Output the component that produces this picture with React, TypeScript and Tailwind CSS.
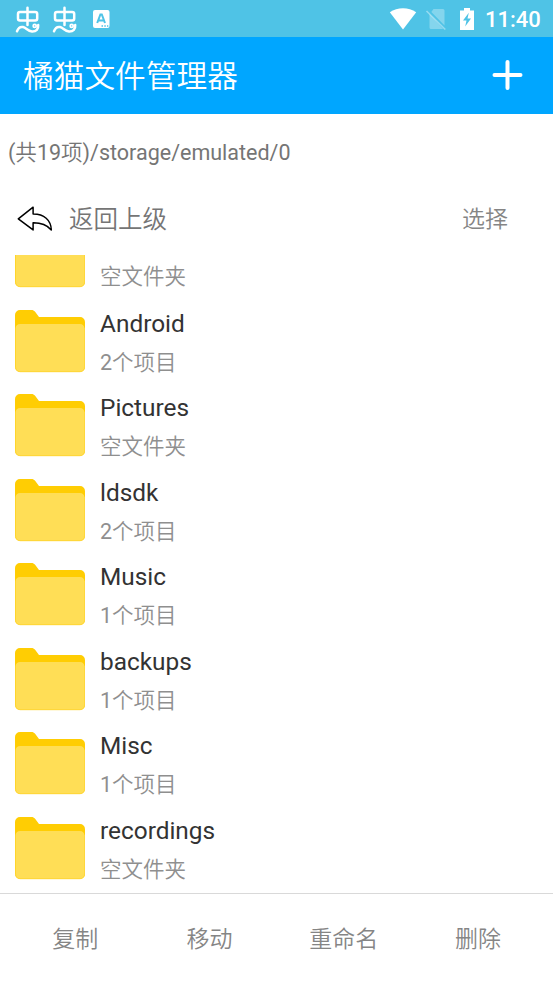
interface FolderItem {
  name?: string;
  count?: number;
}

const folders: FolderItem[] = [
  {},
  { name: 'Android', count: 2 },
  { name: 'Pictures' },
  { name: 'ldsdk', count: 2 },
  { name: 'Music', count: 1 },
  { name: 'backups', count: 1 },
  { name: 'Misc', count: 1 },
  { name: 'recordings' },
];

const actions = ['复制', '移动', '重命名', '删除'];

function BugIcon() {
  return (
    <svg width="26" height="28" viewBox="0 0 26 28" fill="none" stroke="white" strokeWidth="2.5" strokeLinecap="round">
      <rect x="4" y="6.900" width="19.200" height="8.600" rx="2" />
      <path d="M13.500 2.800v17.200" />
      <path d="M3 26.300c1.200-3.200 3.400-4.700 6-4.200 3.300.6 4.500 4 9 4.300 4.200.2 6.600-2.400 6.200-6.300" />
      <circle cx="20.700" cy="20.900" r="1.500" strokeWidth="1.800" />
    </svg>
  );
}

function StatusBar() {
  return (
    <div className="h-[37px] shrink-0 bg-[#4fc3e6] flex items-center justify-between pl-[14px] pr-[13px]">
      <div className="flex items-center">
        <BugIcon />
        <div className="ml-[11px]">
          <BugIcon />
        </div>
        <svg className="ml-[15px]" width="18" height="20" viewBox="0 0 18 20">
          <rect x="1" y="1" width="16.500" height="18" rx="2" fill="white" />
          <path d="M5.200 14 8.400 5.500h1.400l3.200 8.500M6.600 11.500h4.800" fill="none" stroke="#4fc3e6" strokeWidth="2" />
          <path d="M9.500 17h1.500M12.300 17h1.500M15 17h1.300" stroke="#4fc3e6" strokeWidth="1.300" />
        </svg>
      </div>
      <div className="flex items-center">
        <svg width="28" height="24" viewBox="0 0 28 24">
          <path d="M.8 5.200C8.500-.2 19.500-.2 27.200 5.200L14 22.500Z" fill="white" />
        </svg>
        <svg className="ml-[8px]" width="22" height="24" viewBox="0 0 22 24">
          <path d="M8.500 2h9.500a1.500 1.500 0 0 1 1.500 1.500v15L6.300 5ZM4.500 7v13.500A1.500 1.500 0 0 0 6 22h12.200Z" fill="white" fillOpacity=".3" />
          <path d="m1.500 4 18.800 18.500" stroke="white" strokeOpacity=".4" strokeWidth="1.600" />
        </svg>
        <svg className="ml-[12px]" width="16" height="24" viewBox="0 0 16 24">
          <path d="M5 1h6v2.500h4V23H1V3.500h4Z" fill="white" />
          <path d="M9.800 5.800 4 13.500h3.500L6.200 19.500l5.800-8H8.500Z" fill="#4fc3e6" />
        </svg>
        <span className="ml-[10px] w-[55px] pt-[2px] text-right text-[22px] leading-none font-medium text-white whitespace-nowrap">11:40</span>
      </div>
    </div>
  );
}

function FolderIcon() {
  return (
    <svg className="shrink-0 mt-px" width="70" height="63" viewBox="0 0 70 63">
      <path d="M5 0h11.500c1.500 0 2.500.5 3.400 1.600L24 7h41a5 5 0 0 1 5 5v45a5 5 0 0 1-5 5H5a5 5 0 0 1-5-5V5a5 5 0 0 1 5-5Z" fill="#ffcd03" />
      <path d="M5 14h60a4.500 4.500 0 0 1 4.500 4.500V57a4.500 4.500 0 0 1-4.500 4.800H5A4.500 4.500 0 0 1 .5 57V18.500A4.500 4.500 0 0 1 5 14Z" fill="#ffde56" />
      <path d="M.7 57A4.500 4.500 0 0 0 5 61.700h60a4.500 4.500 0 0 0 4.500-4.700V18" fill="none" stroke="#ffd73a" />
    </svg>
  );
}

function FolderRow({ item }: { item: FolderItem }) {
  return (
    <div className="h-[84.5px] flex items-center pl-[15px]">
      <FolderIcon />
      <div className="ml-[15px] pt-[4px] h-[80px] flex flex-col">
        <div className="h-[38px] text-[24.4px] leading-[38px] text-[#333333]">{item.name}</div>
        <div className="mt-px text-[21.5px] leading-[38px] text-[#8f8f8f] font-[350]">
          {item.count ? (
            <>
              <span className="font-normal">{item.count}</span>个项目
            </>
          ) : (
            '空文件夹'
          )}
        </div>
      </div>
    </div>
  );
}

export default function App() {
  return (
    <div className="w-full h-[983px] flex flex-col overflow-hidden bg-white font-['Roboto','Noto_Sans_CJK_SC',sans-serif]">
      <StatusBar />
      <header className="h-[76.5px] shrink-0 bg-[#00a6ff] flex items-center justify-between pl-[23px] pr-[30px]">
        <h1 className="pt-[4px] text-[30.7px] leading-none font-[350] text-white">橘猫文件管理器</h1>
        <svg width="32" height="32" viewBox="0 0 32 32" stroke="white" strokeWidth="4" strokeLinecap="round">
          <path d="M16.500 3v26M3.500 16h26" />
        </svg>
      </header>

      <div className="h-[76.5px] shrink-0 flex items-center pt-[2px] px-[8px] text-[21.5px] text-[#757575]">
        <span>
          (<span className="font-[350]">共</span>19<span className="font-[350]">项</span>)/storage/emulated/0
        </span>
      </div>

      <div className="h-[64.5px] shrink-0 flex items-start justify-between pl-[17px] pr-[45px]">
        <div className="h-[58px] flex items-center">
          <svg width="36" height="26" viewBox="0 0 36 26" fill="none" stroke="black" strokeWidth="1.500" strokeLinejoin="round">
            <path d="M1.300 12.800 16.100 1.200v6.900C27 8 34 14 34.300 23.900 29.500 18.500 24 16.700 16.100 16.800v7.100Z" />
          </svg>
          <span className="ml-[16px] pt-[2px] text-[24.5px] text-[#757575] font-[350]">返回上级</span>
        </div>
        <div className="h-[60px] flex items-center text-[23px] text-[#858585] font-[350]">选择</div>
      </div>

      <main className="flex-1 min-h-0 overflow-hidden">
        <div className="-mt-[40.4px]">
          {folders.map((item, i) => (
            <FolderRow key={i} item={item} />
          ))}
        </div>
      </main>

      <footer className="h-[90px] shrink-0 border-t border-[#d9d9d9] grid grid-cols-4 items-center px-[8px] pt-[3px] text-center text-[23px] text-[#858585] font-[350]">
        {actions.map((label) => (
          <span key={label}>{label}</span>
        ))}
      </footer>
    </div>
  );
}
